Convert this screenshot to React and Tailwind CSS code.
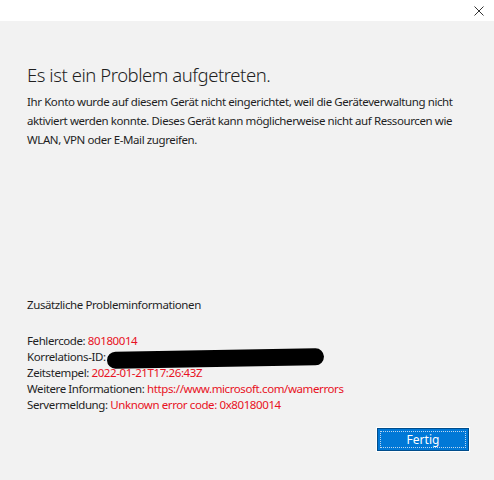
import React from 'react';

const Row = ({ label, children }) => (
  <p className="whitespace-nowrap h-[16px]">
    {label} <span className="text-[#e81123]">{children}</span>
  </p>
);

const App = () => {
  return (
    <div className="w-[494px] h-[480px] bg-[#f2f2f2] flex flex-col text-[#1f1f1f] overflow-hidden" style={{ fontFamily: '"Noto Sans", "Segoe UI", sans-serif' }}>
      {/* title bar */}
      <div className="h-[21px] bg-white flex justify-end shrink-0">
        <button className="w-[30px] h-[21px] flex items-center justify-center text-[#333]">
          <svg width="10" height="10" viewBox="0 0 10 10" fill="none" stroke="currentColor" strokeWidth="1">
            <path d="M0.5 0.5 L9.5 9.5 M9.5 0.5 L0.5 9.5" />
          </svg>
        </button>
      </div>

      <div className="flex-1 flex flex-col pl-[27px] pr-[20px]">
        <h1 className="mt-[41px] text-[18.5px] leading-[26px] font-light tracking-[-0.45px]">Es ist ein Problem aufgetreten.</h1>
        <p className="mt-[4px] text-[11.5px] leading-[19px] tracking-[-0.4px]">
          Ihr Konto wurde auf diesem Gerät nicht eingerichtet, weil die Geräteverwaltung nicht aktiviert werden konnte. Dieses Gerät kann möglicherweise nicht auf Ressourcen wie WLAN, VPN oder E-Mail zugreifen.
        </p>

        <p className="mt-[148px] text-[11.5px] leading-[16px] tracking-[-0.4px]">Zusätzliche Probleminformationen</p>

        <div className="mt-[20px] text-[11.5px] leading-[16px] tracking-[-0.4px]">
          <Row label="Fehlercode:">80180014</Row>
          <p className="whitespace-nowrap h-[16px] flex items-center">
            Korrelations-ID:
            <span className="inline-block w-[217px] h-[17px] bg-black rounded-full ml-[1px] mt-[3px] -rotate-[1deg] shrink-0"></span>
          </p>
          <Row label="Zeitstempel:">2022-01-21T17:26:43Z</Row>
          <Row label="Weitere Informationen:">https://www.microsoft.com/wamerrors</Row>
          <Row label="Servermeldung:">Unknown error code: 0x80180014</Row>
        </div>

        <div className="mt-[15px] flex justify-end pr-[5px]">
          <button className="w-[92px] h-[23px] bg-[#0078d7] border border-[#004d8c] outline outline-1 outline-white p-[2px]">
            <span className="w-full h-full border border-dotted border-[#bcd6ee] flex items-center justify-center text-white text-[12px] leading-none">Fertig</span>
          </button>
        </div>
      </div>
    </div>
  );
};

export default App;
